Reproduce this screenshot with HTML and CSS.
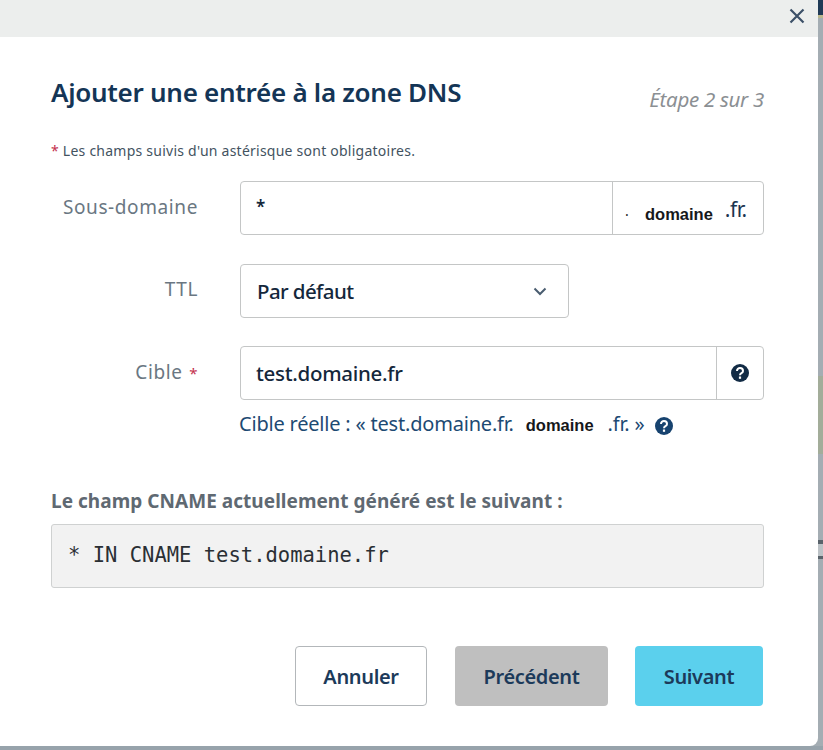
FILE: index.html
```html
<!DOCTYPE html>
<html lang="fr">
<head>
<meta charset="utf-8">
<title>Ajouter une entrée à la zone DNS</title>
<link rel="stylesheet" href="styles.css">
</head>
<body>
<div class="page">
  <div class="topbar">
    <svg class="close" width="18" height="18" viewBox="0 0 18 18"><path d="M2.500 2.500 15.500 15.500M15.500 2.500 2.500 15.500" fill="none" stroke="#3c5068" stroke-width="2.200"/></svg>
  </div>
  <main class="modal">
    <header class="head">
      <h1>Ajouter une entrée à la zone DNS</h1>
      <span class="step">Étape 2 sur 3</span>
    </header>
    <p class="note"><span class="req">*</span> Les champs suivis d'un astérisque sont obligatoires.</p>
    <div class="row row-sub">
      <label class="lab lab-top">Sous-domaine</label>
      <div class="field">
        <div class="val val-star">*</div>
        <div class="addon suffix"><span class="dot">·</span><b class="masked">domaine</b><span class="fr">.fr.</span></div>
      </div>
    </div>
    <div class="row row-ttl">
      <label class="lab lab-ttl">TTL</label>
      <div class="field select">
        <div class="val">Par défaut</div>
        <svg class="chev" width="14" height="9" viewBox="0 0 14 9"><path d="M1.500 1.500 7 7l5.500-5.500" fill="none" stroke="#4a5d70" stroke-width="2"/></svg>
      </div>
    </div>
    <div class="row row-cible">
      <label class="lab lab-top">Cible <span class="req req-lab">*</span></label>
      <div class="field">
        <div class="val">test.domaine.fr</div>
        <div class="addon help">
          <svg width="18" height="18" viewBox="0 0 18 18"><circle cx="9" cy="9" r="9" fill="#122b45"/><path d="M6 7c0-4.200 6-4 6 0 0 2.400-3 2-3 4.200" fill="none" stroke="#fff" stroke-width="2"/><rect x="7.900" y="12.500" width="2.200" height="2.300" fill="#fff"/></svg>
        </div>
      </div>
    </div>
    <div class="real">
      <span>Cible réelle : « test.domaine.fr.</span><b class="masked m2">domaine</b><span>.fr. »</span>
      <svg class="real-ico" width="18" height="18" viewBox="0 0 18 18"><circle cx="9" cy="9" r="9" fill="#17436f"/><path d="M6 7c0-4.200 6-4 6 0 0 2.400-3 2-3 4.200" fill="none" stroke="#fff" stroke-width="2"/><rect x="7.900" y="12.500" width="2.200" height="2.300" fill="#fff"/></svg>
    </div>
    <h2>Le champ CNAME actuellement généré est le suivant :</h2>
    <pre class="code">* IN CNAME test.domaine.fr</pre>
    <footer class="actions">
      <button class="btn ghost">Annuler</button>
      <button class="btn grey">Précédent</button>
      <button class="btn primary">Suivant</button>
    </footer>
  </main>
</div>
</body>
</html>
```

FILE: styles.css
```css
* { box-sizing: border-box; }
html, body { margin: 0; height: 100%; }
body {
  background: linear-gradient(to bottom,
    #1f3a56 0, #1f3a56 15px,
    #b9b78e 15px, #b9b78e 18px,
    #a4adb3 18px, #a4adb3 376px,
    #a3ad9a 376px, #a3ad9a 454px,
    #a4adb3 454px, #a4adb3 540px,
    #5a636b 540px, #5a636b 544px,
    #bcc2c6 544px, #bcc2c6 556px,
    #5a636b 556px, #5a636b 559px,
    #a4adb3 559px, #a4adb3 100%);
  font-family: "Noto Sans", "Open Sans", sans-serif;
  color: #1c3550;
  overflow: hidden;
}
.page { width: 823px; height: 750px; }
.page::after {
  content: "";
  display: block;
  height: 4px;
  background: #97a3ab;
}
.topbar {
  height: 37px;
  width: 818px;
  background: #eceeed;
  display: flex;
  justify-content: flex-end;
  align-items: flex-start;
  padding: 7px 12px 0 0;
}
.modal {
  width: 818px;
  height: 709px;
  background: #fff;
  border-radius: 0 0 8px 0;
  padding: 39px 54px 0 51px;
}
.head {
  display: flex;
  justify-content: space-between;
  align-items: center;
  height: 32px;
}
h1 {
  margin: 0;
  font-size: 26px;
  font-weight: 600;
  color: #143556;
  letter-spacing: -0.28px;
}
.step {
  font-style: italic;
  font-size: 20.500px;
  color: #8b8f93;
  letter-spacing: -0.3px;
  padding-top: 13px;
}
.note {
  margin: 34px 0 0;
  font-size: 14px;
  line-height: 18px;
  color: #43535f;
  letter-spacing: 0.24px;
}
.req { color: #c3304d; }
.req-lab { font-size: 15px; margin-left: 1px; }
.row { display: flex; align-items: flex-start; }
.row-sub { margin-top: 21px; }
.row-ttl { margin-top: 29px; }
.row-cible { margin-top: 28px; }
.lab {
  width: 147px;
  margin-right: 42px;
  text-align: right;
  font-size: 19px;
  line-height: 26px;
  color: #6a7782;
  letter-spacing: 0.6px;
  padding-top: 13px;
}
.lab-ttl { padding-top: 12px; }
.field {
  width: 524px;
  height: 54px;
  border: 1px solid #c4c6c6;
  border-radius: 4px;
  display: flex;
  align-items: center;
  background: #fff;
}
.val {
  flex: 1;
  padding-left: 15px;
  font-size: 20.500px;
  font-weight: 500;
  letter-spacing: -0.3px;
  color: #14273b;
}
.val-star { font-weight: 600; font-size: 17px; padding-bottom: 4px; }
.select { width: 329px; }
.select .val { padding-left: 16px; letter-spacing: -0.6px; }
.chev { margin-right: 21px; }
.addon {
  height: 100%;
  border-left: 1px solid #c4c6c6;
  display: flex;
  align-items: center;
}
.suffix { width: 151px; padding-left: 12px; }
.dot { font-size: 14px; color: #222; width: 20px; padding-top: 12px; }
.masked {
  font-family: "Liberation Sans", Arial, sans-serif;
  font-weight: 700;
  font-size: 16.500px;
  color: #16181b;
  padding-top: 12px;
}
.fr { font-size: 21px; margin-left: 12px; letter-spacing: -0.5px; padding-top: 2px; }
.help { width: 47px; justify-content: center; }
.real {
  display: flex;
  align-items: center;
  margin: 9px 0 0 188px;
  font-size: 20px;
  line-height: 28px;
  color: #1d4a73;
  letter-spacing: -0.2px;
}
.m2 { margin: 0 14px 0 12px; letter-spacing: 0; padding-top: 2px; }
.real-ico { margin-left: 11px; margin-top: 4px; }
h2 {
  margin: 49px 0 0;
  font-size: 19px;
  line-height: 26px;
  font-weight: 700;
  color: #5f6972;
  letter-spacing: 0.04px;
}
.code {
  margin: 10px 0 0;
  width: 713px;
  height: 64px;
  background: #f2f2f2;
  border: 1px solid #cfd1d1;
  border-radius: 3px;
  padding: 0 0 0 16px;
  font-family: "DejaVu Sans Mono", monospace;
  font-size: 20.500px;
  line-height: 60px;
  color: #2a2f34;
}
.actions {
  display: flex;
  justify-content: flex-end;
  gap: 28px;
  margin-top: 58px;
  width: 712px;
}
.btn {
  height: 60px;
  border: 0;
  border-radius: 4px;
  font-family: inherit;
  font-size: 20px;
  font-weight: 600;
  color: #1c3a5a;
  letter-spacing: -0.35px;
  padding: 0;
}
.ghost { width: 132px; background: #fff; border: 1px solid #b3b7ba; }
.grey { width: 153px; background: #bfbfbf; }
.primary { width: 128px; background: #5bd0ed; margin-left: -1px; }
```
